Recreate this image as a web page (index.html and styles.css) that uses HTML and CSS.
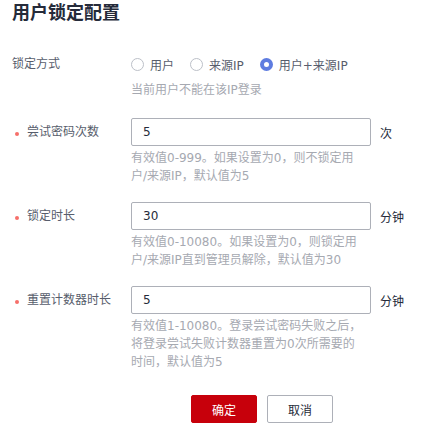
FILE: index.html
```html
<!DOCTYPE html>
<html lang="zh-CN">
<head>
<meta charset="utf-8">
<title>用户锁定配置</title>
<link rel="stylesheet" href="styles.css">
</head>
<body>
<div class="page">
  <h1 class="title">用户锁定配置</h1>
  <div class="form">
    <div class="item item-first">
      <div class="label">锁定方式</div>
      <div class="content">
        <div class="control radios">
          <label class="radio"><span class="dot"></span>用户</label>
          <label class="radio"><span class="dot"></span>来源IP</label>
          <label class="radio"><span class="dot checked"></span>用户+来源IP</label>
        </div>
        <div class="help">当前用户不能在该IP登录</div>
      </div>
    </div>
    <div class="item">
      <div class="label"><span class="star"></span>尝试密码次数</div>
      <div class="content">
        <div class="control"><div class="input">5</div><span class="unit">次</span></div>
        <div class="help">有效值0-999。如果设置为0，则不锁定用户/来源IP，默认值为5</div>
      </div>
    </div>
    <div class="item">
      <div class="label"><span class="star"></span>锁定时长</div>
      <div class="content">
        <div class="control"><div class="input">30</div><span class="unit">分钟</span></div>
        <div class="help">有效值0-10080。如果设置为0，则锁定用户/来源IP直到管理员解除，默认值为30</div>
      </div>
    </div>
    <div class="item">
      <div class="label"><span class="star"></span>重置计数器时长</div>
      <div class="content">
        <div class="control"><div class="input">5</div><span class="unit">分钟</span></div>
        <div class="help">有效值1-10080。登录尝试密码失败之后，将登录尝试失败计数器重置为0次所需要的时间，默认值为5</div>
      </div>
    </div>
  </div>
  <div class="actions">
    <button class="btn primary">确定</button>
    <button class="btn">取消</button>
  </div>
</div>
</body>
</html>
```
FILE: styles.css
```css
* { box-sizing: border-box; }
body {
  margin: 0;
  background: #fff;
  font-family: "DejaVu Sans", "Noto Sans CJK SC", sans-serif;
  color: #575d6c;
  font-size: 12px;
}
.page { padding: 0 12px; }
.title {
  margin: 0;
  font-size: 18px;
  line-height: 26px;
  font-weight: bold;
  color: #252b3a;
}
.form { margin-top: 24px; }
.item {
  display: grid;
  grid-template-columns: 119px 1fr;
  margin-bottom: 17px;
}
.item-first { margin-bottom: 19px; }
.label {
  line-height: 28px;
  height: 28px;
  display: flex;
  align-items: center;
}
.star {
  width: 4px;
  height: 4px;
  border-radius: 50%;
  background: #f66f6a;
  margin: 4px 8px 0 3px;
}
.control {
  display: flex;
  align-items: center;
  height: 28px;
}
.radios { gap: 16px; }
.radio {
  display: flex;
  align-items: center;
  color: #575d6c;
}
.dot {
  width: 13px;
  height: 13px;
  border: 1px solid #bcc0c8;
  border-radius: 50%;
  margin-right: 6px;
  background: #fff;
}
.dot.checked { border: 4px solid #5e7ce0; }
.input {
  width: 240px;
  height: 28px;
  border: 1px solid #adb0b8;
  border-radius: 2px;
  padding: 0 11px;
  line-height: 26px;
  font-size: 12px;
  color: #252b3a;
}
.unit {
  margin-left: 9px;
  color: #252b3a;
}
.help {
  margin-top: 3px;
  width: 233px;
  line-height: 18px;
  color: #a6a9b1;
}
.actions {
  display: flex;
  gap: 10px;
  padding-left: 179px;
  margin-top: 24px;
}
.btn {
  width: 66px;
  height: 28px;
  border: 1px solid #adb0b8;
  border-radius: 2px;
  background: #fff;
  color: #252b3a;
  font-family: inherit;
  font-size: 12px;
  padding: 0;
}
.btn.primary {
  background: #c7000b;
  border-color: #c7000b;
  color: #fff;
}
```
